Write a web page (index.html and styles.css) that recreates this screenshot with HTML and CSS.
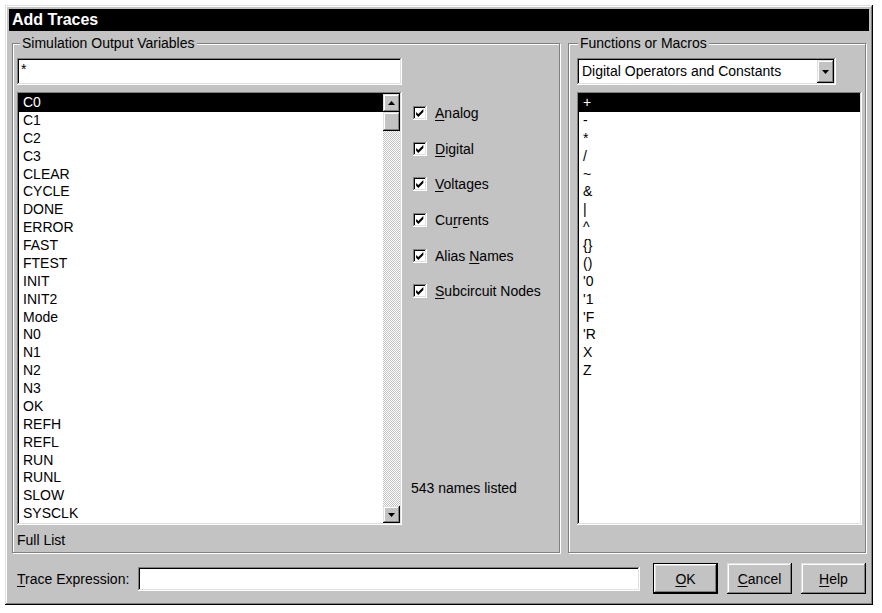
FILE: index.html
```html
<!DOCTYPE html>
<html lang="en">
<head>
    <meta charset="UTF-8">
    <meta name="viewport" content="width=device-width, initial-scale=1.0">
    <title>Add Traces</title>
    <link rel="stylesheet" href="styles.css">
</head>
<body>
    <div class="window">
        <div class="title-bar">Add Traces</div>
        <div class="dialog-body">
            <div class="group-row">
                <!-- Left group: output variables -->
                <div class="group group-vars">
                    <div class="group-title">Simulation Output Variables</div>
                    <div class="vars-body">
                        <div class="vars-col">
                            <div class="field filter-field">*</div>
                            <div class="listbox vars-list">
                                <div class="list-items">
                                    <div class="list-item selected">C0</div>
                                    <div class="list-item">C1</div>
                                    <div class="list-item">C2</div>
                                    <div class="list-item">C3</div>
                                    <div class="list-item">CLEAR</div>
                                    <div class="list-item">CYCLE</div>
                                    <div class="list-item">DONE</div>
                                    <div class="list-item">ERROR</div>
                                    <div class="list-item">FAST</div>
                                    <div class="list-item">FTEST</div>
                                    <div class="list-item">INIT</div>
                                    <div class="list-item">INIT2</div>
                                    <div class="list-item">Mode</div>
                                    <div class="list-item">N0</div>
                                    <div class="list-item">N1</div>
                                    <div class="list-item">N2</div>
                                    <div class="list-item">N3</div>
                                    <div class="list-item">OK</div>
                                    <div class="list-item">REFH</div>
                                    <div class="list-item">REFL</div>
                                    <div class="list-item">RUN</div>
                                    <div class="list-item">RUNL</div>
                                    <div class="list-item">SLOW</div>
                                    <div class="list-item">SYSCLK</div>
                                </div>
                                <div class="scrollbar">
                                    <div class="scroll-btn scroll-up">
                                        <svg width="7" height="4" viewBox="0 0 7 4"><polygon points="3.5,0 7,4 0,4" fill="#000"/></svg>
                                    </div>
                                    <div class="scroll-thumb"></div>
                                    <div class="scroll-track"></div>
                                    <div class="scroll-btn scroll-down">
                                        <svg width="7" height="4" viewBox="0 0 7 4"><polygon points="0,0 7,0 3.5,4" fill="#000"/></svg>
                                    </div>
                                </div>
                            </div>
                            <div class="list-status">Full List</div>
                        </div>
                        <div class="options-col">
                            <div class="check-row">
                                <span class="check-box"><svg width="10" height="10" viewBox="0 0 9 9"><polygon points="1,3.5 3,5.5 7.5,1 7.5,3.5 3,8 1,6" fill="#000"/></svg></span>
                                <span><u>A</u>nalog</span>
                            </div>
                            <div class="check-row">
                                <span class="check-box"><svg width="10" height="10" viewBox="0 0 9 9"><polygon points="1,3.5 3,5.5 7.5,1 7.5,3.5 3,8 1,6" fill="#000"/></svg></span>
                                <span><u>D</u>igital</span>
                            </div>
                            <div class="check-row">
                                <span class="check-box"><svg width="10" height="10" viewBox="0 0 9 9"><polygon points="1,3.5 3,5.5 7.5,1 7.5,3.5 3,8 1,6" fill="#000"/></svg></span>
                                <span><u>V</u>oltages</span>
                            </div>
                            <div class="check-row">
                                <span class="check-box"><svg width="10" height="10" viewBox="0 0 9 9"><polygon points="1,3.5 3,5.5 7.5,1 7.5,3.5 3,8 1,6" fill="#000"/></svg></span>
                                <span>Cu<u>r</u>rents</span>
                            </div>
                            <div class="check-row">
                                <span class="check-box"><svg width="10" height="10" viewBox="0 0 9 9"><polygon points="1,3.5 3,5.5 7.5,1 7.5,3.5 3,8 1,6" fill="#000"/></svg></span>
                                <span>Alias <u>N</u>ames</span>
                            </div>
                            <div class="check-row">
                                <span class="check-box"><svg width="10" height="10" viewBox="0 0 9 9"><polygon points="1,3.5 3,5.5 7.5,1 7.5,3.5 3,8 1,6" fill="#000"/></svg></span>
                                <span><u>S</u>ubcircuit Nodes</span>
                            </div>
                            <div class="names-count">543 names listed</div>
                        </div>
                    </div>
                </div>

                <!-- Right group: functions -->
                <div class="group group-funcs">
                    <div class="group-title">Functions or Macros</div>
                    <div class="combo">
                        <span class="combo-text">Digital Operators and Constants</span>
                        <span class="combo-btn">
                            <svg width="7" height="4" viewBox="0 0 7 4"><polygon points="0,0 7,0 3.5,4" fill="#000"/></svg>
                        </span>
                    </div>
                    <div class="listbox funcs-list">
                        <div class="list-items">
                            <div class="list-item selected">+</div>
                            <div class="list-item">-</div>
                            <div class="list-item">*</div>
                            <div class="list-item">/</div>
                            <div class="list-item">~</div>
                            <div class="list-item">&amp;</div>
                            <div class="list-item">|</div>
                            <div class="list-item">^</div>
                            <div class="list-item">{}</div>
                            <div class="list-item">()</div>
                            <div class="list-item">'0</div>
                            <div class="list-item">'1</div>
                            <div class="list-item">'F</div>
                            <div class="list-item">'R</div>
                            <div class="list-item">X</div>
                            <div class="list-item">Z</div>
                        </div>
                    </div>
                </div>
            </div>

            <div class="expr-row">
                <span class="expr-label"><u>T</u>race Expression:</span>
                <div class="field expr-field"></div>
                <div class="expr-buttons">
                    <button class="win-button default-button"><u>O</u>K</button>
                    <button class="win-button"><u>C</u>ancel</button>
                    <button class="win-button"><u>H</u>elp</button>
                </div>
            </div>
        </div>
    </div>
</body>
</html>
```

FILE: styles.css
```css
/* Base styles */
body {
    margin: 0;
    background: #fff;
    font-family: "Liberation Sans", Arial, sans-serif;
    font-size: 14px;
    color: #000;
}

u {
    text-underline-offset: 2px;
    text-decoration-thickness: 1px;
}

.window {
    width: 868px;
    height: 600px;
    margin: 5px;
    padding: 4px;
    box-sizing: border-box;
    background: #c3c3c3;
    box-shadow: inset -1px -1px #000, inset 1px 1px #dfdfdf,
                inset -2px -2px #808080, inset 2px 2px #fff;
}

.title-bar {
    height: 22px;
    line-height: 22px;
    padding-left: 3px;
    background: #000;
    color: #fff;
    font-size: 16px;
    font-weight: bold;
}

.dialog-body {
    padding: 12px 3px 0 3px;
}

.group-row {
    display: flex;
    gap: 8px;
}

/* Group boxes */
.group {
    height: 510px;
    box-sizing: border-box;
    border: 1px solid #808080;
    box-shadow: inset 1px 1px #fff, 1px 1px #fff;
}

.group-vars {
    width: 548px;
    padding: 0 4px;
}

.group-funcs {
    width: 298px;
    padding: 0 3px 0 8px;
}

.group-title {
    width: fit-content;
    margin-top: -9px;
    padding: 0 2px;
    line-height: 16px;
    background: #c3c3c3;
}

.group-vars .group-title {
    margin-left: 3px;
}

.group-funcs .group-title {
    margin-left: 1px;
}

/* Sunken fields */
.field,
.listbox,
.combo {
    box-sizing: border-box;
    background: #fff;
    box-shadow: inset -1px -1px #fff, inset 1px 1px #808080,
                inset -2px -2px #dfdfdf, inset 2px 2px #000;
}

.vars-body {
    display: flex;
    gap: 11px;
    margin-top: 7px;
}

.vars-col {
    width: 385px;
}

.filter-field {
    height: 27px;
    padding: 3px 4px;
    line-height: 16px;
}

.listbox {
    display: flex;
    height: 433px;
    margin-top: 7px;
    padding: 2px;
}

.list-items {
    flex: 1;
    overflow: hidden;
}

.list-item {
    height: 17.875px;
    line-height: 17.875px;
    padding-left: 4px;
    white-space: nowrap;
}

.list-item.selected {
    background: #000;
    color: #fff;
}

.list-status {
    margin-top: 7px;
    line-height: 16px;
}

/* Scrollbar */
.scrollbar {
    width: 17px;
    display: flex;
    flex-direction: column;
}

.scroll-btn,
.scroll-thumb,
.combo-btn,
.win-button {
    background: #c3c3c3;
    box-shadow: inset -1px -1px #000, inset 1px 1px #dfdfdf,
                inset -2px -2px #808080, inset 2px 2px #fff;
}

.scroll-btn {
    display: flex;
    align-items: center;
    justify-content: center;
    height: 18px;
}

.scroll-down {
    height: 17px;
}

.scroll-thumb {
    height: 19px;
}

.scroll-track {
    flex: 1;
    background: repeating-conic-gradient(#fff 0 25%, #c3c3c3 0 50%) 0 0 / 2px 2px;
}

/* Check options */
.options-col {
    flex: 1;
    display: flex;
    flex-direction: column;
    padding-top: 37px;
}

.check-row {
    display: flex;
    align-items: center;
    gap: 8px;
    height: 35.7px;
}

.check-box {
    display: flex;
    align-items: center;
    justify-content: center;
    width: 14px;
    height: 14px;
    background: #fff;
    box-shadow: inset -1px -1px #fff, inset 1px 1px #808080,
                inset -2px -2px #dfdfdf, inset 2px 2px #000;
}

.names-count {
    margin-top: auto;
    margin-bottom: 52px;
    margin-left: -2px;
    line-height: 16px;
}

/* Functions group */
.combo {
    display: flex;
    width: 259px;
    height: 27px;
    margin-top: 7px;
    padding: 2px;
}

.combo-text {
    flex: 1;
    padding-left: 3px;
    line-height: 23px;
}

.combo-btn {
    display: flex;
    align-items: center;
    justify-content: center;
    width: 17px;
}

/* Expression row */
.expr-row {
    display: flex;
    align-items: center;
    margin-top: 10px;
    padding-left: 5px;
}

.expr-label {
    width: 121px;
}

.expr-field {
    width: 502px;
    height: 24px;
    margin-right: 13px;
}

.expr-buttons {
    display: flex;
    gap: 9px;
}

.win-button {
    width: 65px;
    height: 31px;
    border: none;
    padding: 0;
    font-family: inherit;
    font-size: 14px;
    color: #000;
}

.default-button {
    box-shadow: inset -2px -2px #000, inset 1px 1px #000,
                inset 2px 2px #fff, inset -3px -3px #808080,
                inset 3px 3px #dfdfdf;
}
```
